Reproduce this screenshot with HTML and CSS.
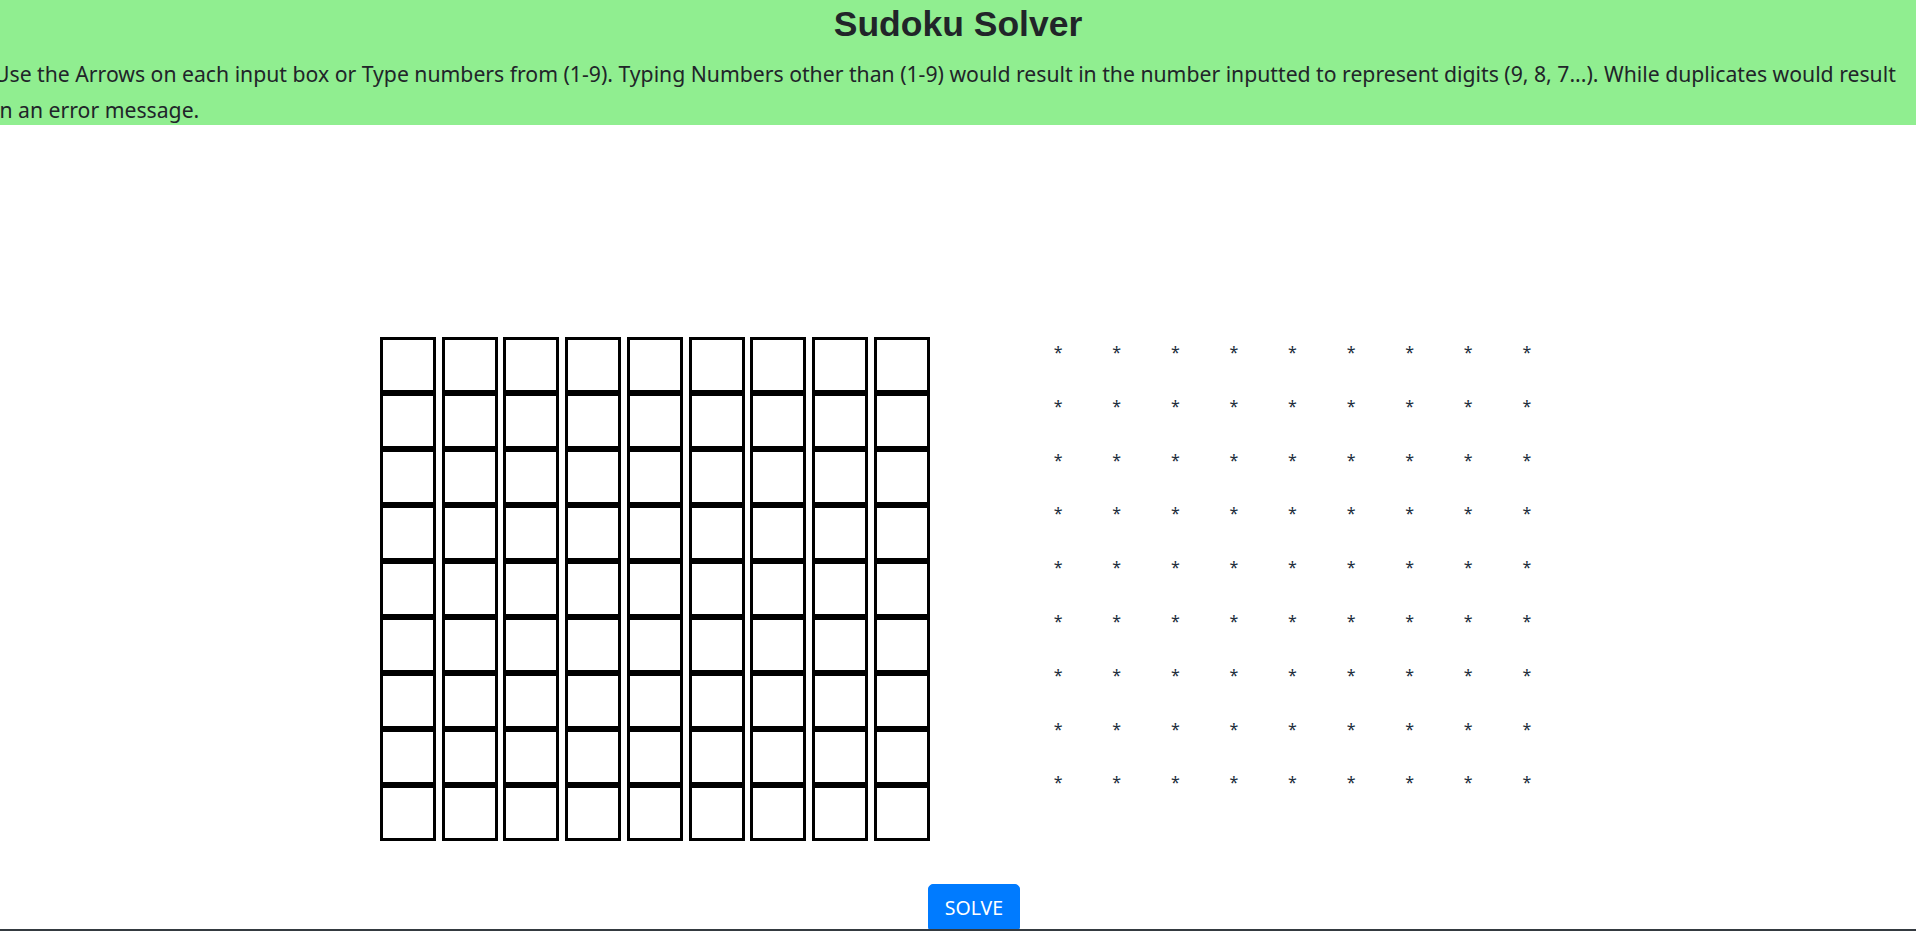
FILE: index.html
```html
<!DOCTYPE html>
<html lang="en">
<head>
<meta charset="utf-8">
<title>Sudoku Solver</title>
<link rel="stylesheet" href="styles.css">
</head>
<body>
<header class="banner">
  <h1 class="title">Sudoku Solver</h1>
  <p class="intro">Use the Arrows on each input box or Type numbers from (1-9). Typing Numbers other than (1-9) would result in the number inputted to represent digits (9, 8, 7...). While duplicates would result in an error message.</p>
</header>
<main class="board">
  <div class="inputs">
    <div class="col"><input class="cell" type="text"><input class="cell" type="text"><input class="cell" type="text"><input class="cell" type="text"><input class="cell" type="text"><input class="cell" type="text"><input class="cell" type="text"><input class="cell" type="text"><input class="cell" type="text"></div>
    <div class="col"><input class="cell" type="text"><input class="cell" type="text"><input class="cell" type="text"><input class="cell" type="text"><input class="cell" type="text"><input class="cell" type="text"><input class="cell" type="text"><input class="cell" type="text"><input class="cell" type="text"></div>
    <div class="col"><input class="cell" type="text"><input class="cell" type="text"><input class="cell" type="text"><input class="cell" type="text"><input class="cell" type="text"><input class="cell" type="text"><input class="cell" type="text"><input class="cell" type="text"><input class="cell" type="text"></div>
    <div class="col"><input class="cell" type="text"><input class="cell" type="text"><input class="cell" type="text"><input class="cell" type="text"><input class="cell" type="text"><input class="cell" type="text"><input class="cell" type="text"><input class="cell" type="text"><input class="cell" type="text"></div>
    <div class="col"><input class="cell" type="text"><input class="cell" type="text"><input class="cell" type="text"><input class="cell" type="text"><input class="cell" type="text"><input class="cell" type="text"><input class="cell" type="text"><input class="cell" type="text"><input class="cell" type="text"></div>
    <div class="col"><input class="cell" type="text"><input class="cell" type="text"><input class="cell" type="text"><input class="cell" type="text"><input class="cell" type="text"><input class="cell" type="text"><input class="cell" type="text"><input class="cell" type="text"><input class="cell" type="text"></div>
    <div class="col"><input class="cell" type="text"><input class="cell" type="text"><input class="cell" type="text"><input class="cell" type="text"><input class="cell" type="text"><input class="cell" type="text"><input class="cell" type="text"><input class="cell" type="text"><input class="cell" type="text"></div>
    <div class="col"><input class="cell" type="text"><input class="cell" type="text"><input class="cell" type="text"><input class="cell" type="text"><input class="cell" type="text"><input class="cell" type="text"><input class="cell" type="text"><input class="cell" type="text"><input class="cell" type="text"></div>
    <div class="col"><input class="cell" type="text"><input class="cell" type="text"><input class="cell" type="text"><input class="cell" type="text"><input class="cell" type="text"><input class="cell" type="text"><input class="cell" type="text"><input class="cell" type="text"><input class="cell" type="text"></div>
  </div>
  <div class="result">
    <span>*</span><span>*</span><span>*</span><span>*</span><span>*</span><span>*</span><span>*</span><span>*</span><span>*</span>
    <span>*</span><span>*</span><span>*</span><span>*</span><span>*</span><span>*</span><span>*</span><span>*</span><span>*</span>
    <span>*</span><span>*</span><span>*</span><span>*</span><span>*</span><span>*</span><span>*</span><span>*</span><span>*</span>
    <span>*</span><span>*</span><span>*</span><span>*</span><span>*</span><span>*</span><span>*</span><span>*</span><span>*</span>
    <span>*</span><span>*</span><span>*</span><span>*</span><span>*</span><span>*</span><span>*</span><span>*</span><span>*</span>
    <span>*</span><span>*</span><span>*</span><span>*</span><span>*</span><span>*</span><span>*</span><span>*</span><span>*</span>
    <span>*</span><span>*</span><span>*</span><span>*</span><span>*</span><span>*</span><span>*</span><span>*</span><span>*</span>
    <span>*</span><span>*</span><span>*</span><span>*</span><span>*</span><span>*</span><span>*</span><span>*</span><span>*</span>
    <span>*</span><span>*</span><span>*</span><span>*</span><span>*</span><span>*</span><span>*</span><span>*</span><span>*</span>
  </div>
</main>
<div class="actions">
  <button class="solve" type="button">SOLVE</button>
</div>
<footer class="footer"></footer>
</body>
</html>
```

FILE: styles.css
```css
html, body {
  margin: 0;
  padding: 0;
}

body {
  background: #ffffff;
  color: #212529;
  font-family: "Noto Sans", "Open Sans", sans-serif;
  overflow-x: hidden;
}

.banner {
  background: #90ee90;
  padding: 3px 0 0;
  height: 125px;
  box-sizing: border-box;
  overflow: hidden;
}

.title {
  margin: 0;
  text-align: center;
  font-family: "Liberation Sans", Arial, sans-serif;
  font-weight: 700;
  font-size: 35.5px;
  line-height: 42px;
  color: #212529;
}

.intro {
  margin: 11px 0 0 -6px;
  width: 1910px;
  font-size: 21.2px;
  line-height: 36px;
  color: #212529;
}

.board {
  display: flex;
  justify-content: center;
  align-items: flex-start;
  gap: 99px;
  padding: 201px 0 0 20px;
}

.inputs {
  display: flex;
  gap: 5.75px;
  margin-top: 11px;
}

.col {
  display: flex;
  flex-direction: column;
}

.cell {
  display: block;
  box-sizing: border-box;
  width: 56px;
  height: 56px;
  margin: 0;
  padding: 0;
  border: 3px solid #000;
  border-radius: 0;
  background: #fff;
  outline: none;
}

.result {
  display: grid;
  grid-template-columns: repeat(9, 58.6px);
  grid-auto-rows: 53.8px;
  font-size: 16px;
  line-height: 53.8px;
  color: #212d3b;
  text-align: center;
}

.actions {
  display: flex;
  justify-content: center;
  padding-left: 32px;
  margin-top: 43px;
}

.solve {
  font-family: "Noto Sans", "Open Sans", sans-serif;
  font-size: 19.5px;
  line-height: 30px;
  padding: 8px 16px;
  border: 1px solid #007bff;
  border-radius: 5px;
  background: #007bff;
  color: #fff;
  cursor: pointer;
}

.footer {
  position: relative;
  margin-top: -3px;
  height: 40px;
  background: #343a40;
}
```
